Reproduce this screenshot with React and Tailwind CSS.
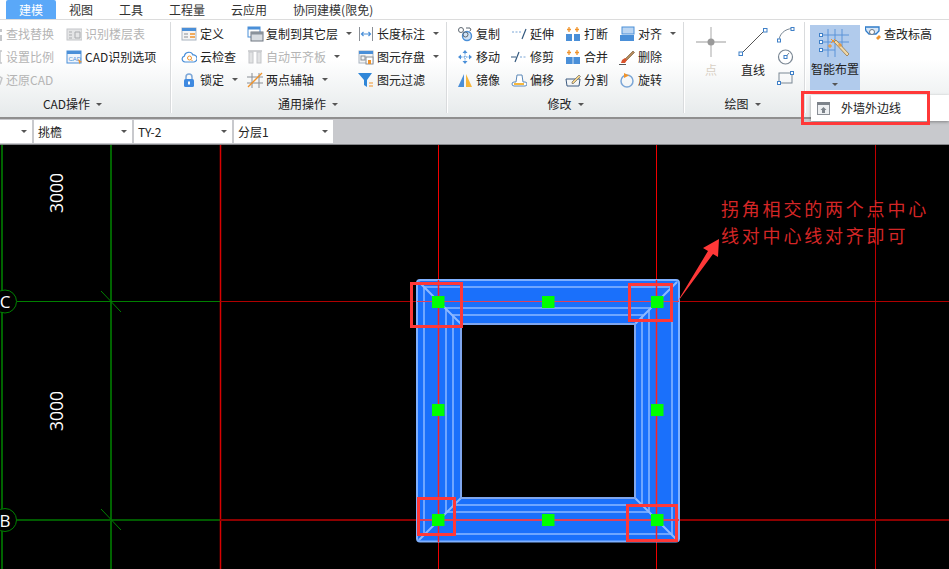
import React from 'react'

const BLUE = '#4a8fd8'
const ORANGE = '#f0932b'
const LIGHT = '#c4c6c9'

function Svg({ children, w = 16, h = 16 }) {
  return (
    <svg width={w} height={h} viewBox={`0 0 ${w} ${h}`} fill="none" className="shrink-0">
      {children}
    </svg>
  )
}

const icons = {
  find: (
    <Svg>
      <rect x="2" y="2" width="5" height="5" stroke={LIGHT} />
      <rect x="9" y="9" width="6" height="6" fill={LIGHT} />
      <rect x="11" y="3" width="4" height="3" fill={LIGHT} />
    </Svg>
  ),
  scale: (
    <Svg>
      <path d="M9 2h6M9 14h6M13 2v12" stroke={LIGHT} strokeWidth="1.5" />
    </Svg>
  ),
  restore: (
    <Svg>
      <path d="M10 3l5 3-2 6-4-1" stroke={LIGHT} strokeWidth="1.5" />
    </Svg>
  ),
  floorTable: (
    <Svg>
      <rect x="1" y="3" width="15" height="11" fill="#e4e5e6" stroke={LIGHT} />
      <path d="M3 6h3M3 9h3M3 12h3M9 6h5v6H9z" stroke="#a9abae" />
    </Svg>
  ),
  cadOpts: (
    <Svg>
      <rect x="1" y="2" width="14" height="12" fill="#eef4fb" stroke={BLUE} />
      <rect x="1" y="2" width="14" height="3" fill={BLUE} />
      <text x="2.5" y="12" fontSize="6" fill={BLUE} fontFamily="Liberation Sans">CAD</text>
      <path d="M12 10l4 3-2 .5-.5 2z" fill={ORANGE} />
    </Svg>
  ),
  define: (
    <Svg>
      <rect x="1" y="2" width="14" height="12" fill="#f4f4f4" stroke="#a9b4c0" />
      <rect x="1" y="2" width="14" height="3" fill={BLUE} />
      <path d="M3 8h4M3 11h4" stroke="#8a8f96" />
      <path d="M9 8h5M9 11h5" stroke={ORANGE} strokeWidth="1.5" />
    </Svg>
  ),
  cloud: (
    <Svg>
      <path d="M4 13a3 3 0 0 1-.6-5.9A4.5 4.5 0 0 1 12 6a3.5 3.5 0 0 1 1 7z" fill="#fff" stroke={BLUE} strokeWidth="1.2" />
      <circle cx="8.5" cy="9" r="2" stroke={ORANGE} />
      <path d="M10 10.5l1.5 1.5" stroke={ORANGE} />
    </Svg>
  ),
  lock: (
    <Svg>
      <path d="M5 7V5a3 3 0 0 1 6 0v2" stroke="#7da7d8" strokeWidth="1.5" />
      <rect x="3" y="7" width="10" height="8" rx="1.5" fill="#3f8ae0" />
      <rect x="7" y="9.5" width="2" height="3" fill="#fff" />
    </Svg>
  ),
  copyLayer: (
    <Svg w={17} h={16}>
      <rect x="1" y="1" width="12" height="10" fill="#fff" stroke={BLUE} />
      <rect x="1" y="1" width="12" height="2.5" fill={BLUE} />
      <rect x="4" y="6" width="12" height="9" fill="#d9dde2" stroke="#6e7781" />
      <rect x="4" y="6" width="12" height="2.5" fill="#8a929b" />
    </Svg>
  ),
  autoFlat: (
    <Svg>
      <path d="M1 2h14" stroke={LIGHT} strokeWidth="1.5" />
      <rect x="2" y="3" width="4" height="11" fill="#e2e3e4" stroke={LIGHT} />
      <rect x="10" y="3" width="4" height="11" fill="#e2e3e4" stroke={LIGHT} />
    </Svg>
  ),
  twoPoint: (
    <Svg>
      <path d="M5 1v15M12 1v15M0 5h16M0 11h16" stroke="#8a8f96" />
      <path d="M1 15L15 1" stroke={ORANGE} strokeWidth="1.3" />
    </Svg>
  ),
  dim: (
    <Svg>
      <path d="M1.5 1v14M14.5 1v14" stroke="#8a8f96" />
      <path d="M3.5 8h9M5.5 6L3.5 8l2 2M10.5 6l2 2-2 2" stroke={BLUE} strokeWidth="1.2" />
    </Svg>
  ),
  saveEl: (
    <Svg>
      <rect x="1" y="2" width="14" height="12" fill="#f4f4f4" stroke="#a9b4c0" />
      <rect x="1" y="2" width="14" height="3" fill={BLUE} />
      <rect x="3" y="7" width="4" height="4" stroke="#8a8f96" />
      <rect x="8" y="8" width="7" height="7" fill="#fff" stroke="#8a8f96" />
      <rect x="10" y="11" width="3" height="4" fill={ORANGE} />
    </Svg>
  ),
  filter: (
    <Svg>
      <path d="M0 1h14L9 8v7l-3-2V8z" fill="#2f86d8" />
      <path d="M11 11h4M11 14h4" stroke={ORANGE} strokeWidth="1.2" />
    </Svg>
  ),
  copy: (
    <Svg>
      <circle cx="4" cy="4" r="2.5" stroke="#5c6670" />
      <circle cx="10" cy="10" r="4.5" fill="#cfe2f6" stroke={BLUE} strokeWidth="1.4" />
      <circle cx="8.5" cy="8.5" r="2.5" stroke="#5c6670" />
      <path d="M9 2h4l1 2-1.5 1" stroke="#5c6670" />
    </Svg>
  ),
  extend: (
    <Svg>
      <path d="M1 6h9" stroke="#7ba6d6" strokeDasharray="2 1.5" />
      <path d="M11 13l4-10" stroke="#33587e" strokeWidth="1.2" />
    </Svg>
  ),
  breakEl: (
    <Svg>
      <rect x="1" y="8" width="6" height="7" fill={BLUE} />
      <rect x="9" y="8" width="6" height="7" fill={BLUE} />
      <path d="M4 1v5M2 3.5h4M12 1v5M10 3.5h4" stroke={ORANGE} strokeWidth="1.3" />
    </Svg>
  ),
  align: (
    <Svg>
      <rect x="3" y="1" width="12" height="7" fill="#bcd6f2" stroke={BLUE} />
      <rect x="1" y="9" width="14" height="6" fill={BLUE} />
    </Svg>
  ),
  move: (
    <Svg>
      <path d="M8 1l2.5 3h-5zM8 15l2.5-3h-5zM1 8l3-2.5v5zM15 8l-3-2.5v5z" fill={BLUE} />
      <path d="M8 4v8M4 8h8" stroke={BLUE} strokeDasharray="1.5 1" />
    </Svg>
  ),
  trim: (
    <Svg>
      <path d="M0 8h5" stroke="#33587e" />
      <path d="M9 8h7" stroke="#7ba6d6" strokeDasharray="2 1.5" />
      <path d="M4 13L8 3" stroke="#33587e" strokeWidth="1.2" />
    </Svg>
  ),
  merge: (
    <Svg>
      <rect x="1" y="8" width="14" height="7" fill={BLUE} />
      <path d="M8 8v7" stroke="#cfe2f6" />
      <path d="M4 1v5M2 3.5h4M12 1v5M10 3.5h4" stroke={ORANGE} strokeWidth="1.3" />
    </Svg>
  ),
  erase: (
    <Svg>
      <path d="M6 10l8-8 1.5 1.5-8 8z" fill="#b48a5a" stroke="#6e5230" strokeWidth=".6" />
      <path d="M3 11l3-2 2 2-2 3H2z" fill="#d9532c" />
      <path d="M0 15.5h7" stroke="#555" />
    </Svg>
  ),
  mirror: (
    <Svg>
      <path d="M7 2v13H1z" fill={BLUE} />
      <path d="M9 2v13h6z" fill="#f6b73c" />
    </Svg>
  ),
  offset: (
    <Svg>
      <path d="M1 12a2 2 0 0 1 2-2h2l1-7h5l1 7h2a2 2 0 0 1 0 4H3a2 2 0 0 1-2-2z" fill="#fff" stroke="#5c88b8" />
      <path d="M3 12h10" stroke="#f6b73c" strokeWidth="2" />
    </Svg>
  ),
  split: (
    <Svg>
      <path d="M1 7h14l-1 7H2z" stroke="#3d5b80" />
      <path d="M7 10l7-7 1.5 1.5-7 7H7z" fill="#f6d58a" stroke="#555" strokeWidth=".6" />
    </Svg>
  ),
  rotate: (
    <Svg>
      <circle cx="8" cy="9" r="6" stroke="#7ba6d6" strokeWidth="1.5" />
      <path d="M5 1l5 2.5L5 6z" fill={ORANGE} />
    </Svg>
  ),
  checkElev: (
    <Svg>
      <path d="M0 1h14v4l-3 3H4L1 5z" fill="#d5e6f8" stroke="#2f7cc9" strokeWidth="1.3" />
      <circle cx="7" cy="6" r="2.5" fill="#fff" stroke="#6e7781" />
      <path d="M11 12l3-3 2 2-3 3z" fill={ORANGE} />
    </Svg>
  ),
}

function Caret({ className = 'ml-[5px]' }) {
  return <span className={`inline-block w-0 h-0 border-x-[3px] border-x-transparent border-t-[3px] border-t-[#555] ${className}`} />
}

function Item({ icon, label, off, caret }) {
  return (
    <div className={`h-[23px] flex items-center gap-[3px] whitespace-nowrap ${off ? 'text-[#b4b4b4]' : 'text-[#222]'}`}>
      <span className="w-4 h-4 shrink-0">{icons[icon]}</span>
      <span>{label}</span>
      {caret && <Caret />}
    </div>
  )
}

function Column({ width, items }) {
  return (
    <div className={`flex flex-col shrink-0 ${width}`}>
      {items.map((it) => (
        <Item key={it.label} {...it} />
      ))}
    </div>
  )
}

function GroupLabel({ children, className = '' }) {
  return (
    <div className={`h-[18px] mb-[4px] flex items-center justify-center text-[#222] ${className}`}>
      {children}
      <Caret className="ml-[6px]" />
    </div>
  )
}

function Sep() {
  return <div className="w-[2px] h-[91px] mt-[2px] shrink-0 bg-[#d9dbdd] border-r border-white" />
}

function Ribbon() {
  return (
    <div className="h-[97px] flex bg-gradient-to-b from-white from-40% to-[#e6eaeb]">
      {/* CAD操作 */}
      <div className="w-[193px] -ml-[23px] shrink-0 flex flex-col justify-between pt-[2px]">
        <div className="flex pl-[10px]">
          <Column
            width="w-[79px]"
            items={[
              { icon: 'find', label: '查找替换', off: true },
              { icon: 'scale', label: '设置比例', off: true },
              { icon: 'restore', label: '还原CAD', off: true },
            ]}
          />
          <Column
            width="w-[100px]"
            items={[
              { icon: 'floorTable', label: '识别楼层表', off: true },
              { icon: 'cadOpts', label: 'CAD识别选项' },
            ]}
          />
        </div>
        <GroupLabel className="pr-[2px]">CAD操作</GroupLabel>
      </div>
      <Sep />

      {/* 通用操作 */}
      <div className="w-[274px] shrink-0 flex flex-col justify-between pt-[2px]">
        <div className="flex pl-[9px]">
          <Column
            width="w-[66px]"
            items={[
              { icon: 'define', label: '定义' },
              { icon: 'cloud', label: '云检查' },
              { icon: 'lock', label: '锁定', caret: true },
            ]}
          />
          <Column
            width="w-[111px]"
            items={[
              { icon: 'copyLayer', label: '复制到其它层', caret: true },
              { icon: 'autoFlat', label: '自动平齐板', caret: true, off: true },
              { icon: 'twoPoint', label: '两点辅轴', caret: true },
            ]}
          />
          <Column
            width="w-[85px]"
            items={[
              { icon: 'dim', label: '长度标注', caret: true },
              { icon: 'saveEl', label: '图元存盘', caret: true },
              { icon: 'filter', label: '图元过滤' },
            ]}
          />
        </div>
        <GroupLabel className="pr-[2px]">通用操作</GroupLabel>
      </div>
      <Sep />

      {/* 修改 */}
      <div className="w-[235px] shrink-0 flex flex-col justify-between pt-[2px]">
        <div className="flex pl-[9px]">
          <Column
            width="w-[54px]"
            items={[
              { icon: 'copy', label: '复制' },
              { icon: 'move', label: '移动' },
              { icon: 'mirror', label: '镜像' },
            ]}
          />
          <Column
            width="w-[54px]"
            items={[
              { icon: 'extend', label: '延伸' },
              { icon: 'trim', label: '修剪' },
              { icon: 'offset', label: '偏移' },
            ]}
          />
          <Column
            width="w-[54px]"
            items={[
              { icon: 'breakEl', label: '打断' },
              { icon: 'merge', label: '合并' },
              { icon: 'split', label: '分割' },
            ]}
          />
          <Column
            width="w-[60px]"
            items={[
              { icon: 'align', label: '对齐', caret: true },
              { icon: 'erase', label: '删除' },
              { icon: 'rotate', label: '旋转' },
            ]}
          />
        </div>
        <GroupLabel>修改</GroupLabel>
      </div>
      <Sep />

      {/* 绘图 */}
      <div className="w-[119px] shrink-0 flex flex-col justify-between pt-[7px]">
        <div className="flex pl-[8px]">
          <div className="w-[36px] flex flex-col items-center">
            <svg width="30" height="30" viewBox="0 0 30 30" fill="none">
              <path d="M15 0v30M0 15h30" stroke="#bdbdbd" strokeWidth="1.3" />
              <circle cx="15" cy="15" r="3.5" fill="#9a9a9a" />
            </svg>
            <span className="mt-[7px] text-[#d8cfc4]">点</span>
          </div>
          <div className="w-[38px] ml-[5px] flex flex-col items-center">
            <svg width="30" height="30" viewBox="0 0 30 30" fill="none">
              <path d="M3 27L27 3" stroke="#555" />
              <rect x="1" y="25" width="3.5" height="3.5" fill="#fff" stroke="#3f80c8" />
              <rect x="25.5" y="1.5" width="3.5" height="3.5" fill="#fff" stroke="#3f80c8" />
            </svg>
            <span className="mt-[7px] text-[#222]">直线</span>
          </div>
          <div className="ml-[5px] flex flex-col gap-[6px]">
            <svg width="18" height="16" viewBox="0 0 18 16" fill="none">
              <path d="M2 14C2 7 8 2 15 1.5" stroke="#7a8794" />
              <rect x="0.5" y="12" width="3" height="3" fill="#fff" stroke="#3f80c8" />
              <rect x="14" y="0.5" width="3" height="3" fill="#fff" stroke="#3f80c8" />
            </svg>
            <svg width="18" height="16" viewBox="0 0 18 16" fill="none">
              <circle cx="8.5" cy="8" r="7" stroke="#7a8794" strokeWidth="1.2" />
              <path d="M8.5 8L12 4" stroke="#7a8794" />
              <rect x="7" y="6.5" width="3" height="3" fill="#fff" stroke="#3f80c8" />
            </svg>
            <svg width="18" height="14" viewBox="0 0 18 14" fill="none">
              <rect x="2" y="2" width="13" height="10" stroke="#7a8794" />
              <rect x="0.5" y="10.5" width="3" height="3" fill="#fff" stroke="#3f80c8" />
              <rect x="13.5" y="0.5" width="3" height="3" fill="#fff" stroke="#3f80c8" />
            </svg>
          </div>
        </div>
        <GroupLabel className="pr-[4px]">绘图</GroupLabel>
      </div>
      <Sep />

      {/* 智能布置 */}
      <div className="flex-1 flex pl-[4px] pt-[5px] items-start">
        <div className="w-[50px] h-[65px] bg-[#b1cbec] flex flex-col items-center">
          <svg width="32" height="31" viewBox="0 0 32 31" fill="none" className="mt-[3px]">
            <path d="M9 1v28M16 1v28M23 1v18M2 7h28M2 14h28M2 22h14" stroke="#5b93d8" />
            <rect x="0.5" y="5.5" width="3" height="3" fill="#fff" stroke="#3f80c8" />
            <rect x="0.5" y="12.5" width="3" height="3" fill="#fff" stroke="#3f80c8" />
            <rect x="0.5" y="20.5" width="3" height="3" fill="#fff" stroke="#3f80c8" />
            <path d="M15 14l13 14 2-2L17 12z" fill="#f0d8a8" stroke="#8a6a3a" strokeWidth=".7" />
            <path d="M12 11l4 4M16 11l-4 4M9 18h4M11 16v4M19 17h4M21 15v4" stroke={ORANGE} />
          </svg>
          <span className="mt-[2px] leading-[16px] text-[#222] whitespace-nowrap">智能布置</span>
          <Caret className="mt-[6px]" />
        </div>
        <div className="ml-[5px] flex items-center gap-[3px] h-[18px] text-[#222] whitespace-nowrap">
          {icons.checkElev}
          <span>查改标高</span>
        </div>
      </div>
    </div>
  )
}

function Combo({ label, width }) {
  return (
    <div className={`h-[23px] bg-white flex items-center justify-between pl-[4px] pr-[5px] shrink-0 text-[#222] ${width}`}>
      <span>{label}</span>
      <Caret className="" />
    </div>
  )
}

const WALL_RINGS = [
  [424, 287, 672, 534],
  [446, 308, 649, 512],
  [453, 315, 642, 505],
]
const NODES = [
  [432, 296], [542, 296], [651, 296],
  [432, 404], [651, 404],
  [432, 514], [542, 514], [651, 514],
]
const MARKS = [
  [410, 282, 53, 46],
  [628, 283, 45, 39],
  [417, 497, 39, 39],
  [626, 504, 52, 38],
]

function Canvas() {
  return (
    <svg width="949" height="424" viewBox="0 145 949 424" className="block bg-black">
      {/* axis grid */}
      <path d="M2 145v424M111 145v424" stroke="#006400" strokeWidth="2" />
      <path d="M17 301.5h203" stroke="#008000" />
      <path d="M17 520h203" stroke="#005a00" strokeWidth="2" />
      <path d="M101 291l20 21M101 509l20 21" stroke="#008000" />
      <circle cx="5" cy="301.5" r="11.5" stroke="#008000" />
      <circle cx="5" cy="520" r="11.5" stroke="#008000" />
      <text x="5" y="308" fill="#fff" fontSize="17" textAnchor="middle" fontFamily="Open Sans, sans-serif">C</text>
      <text x="5" y="527" fill="#fff" fontSize="17" textAnchor="middle" fontFamily="Open Sans, sans-serif">B</text>
      <text transform="translate(63 213) rotate(-90)" fill="#fff" fontSize="17.5" fontFamily="Open Sans, sans-serif">3000</text>
      <text transform="translate(63 431) rotate(-90)" fill="#fff" fontSize="17.5" fontFamily="Open Sans, sans-serif">3000</text>
      <path d="M220.5 145v424" stroke="#d80000" strokeWidth="1.5" />
      <path d="M875.5 145v424" stroke="#c00000" />
      <path d="M220 301.5h729" stroke="#b00000" />
      <path d="M220 520h729" stroke="#8c0000" strokeWidth="2" />
      <path d="M438.5 145v424M656.5 145v424" stroke="#f00000" />

      {/* wall */}
      <rect x="417" y="280" width="262" height="261.5" rx="3" fill="#1a70fb" stroke="#7fb0ff" strokeWidth="2" />
      {WALL_RINGS.map(([x1, y1, x2, y2]) => (
        <rect key={x1} x={x1} y={y1} width={x2 - x1} height={y2 - y1} stroke="#6fa6ff" strokeWidth="2" fill="none" />
      ))}
      <path d="M419 282l42 42M677 282l-42 42M419 540l42-42M677 540l-42-42" stroke="#8db8ff" strokeWidth="2" />
      <rect x="461" y="324" width="174" height="174" fill="#000" stroke="#7fa6ee" strokeWidth="2" />
      <path d="M417 301.5h262" stroke="#e0405a" />
      <path d="M417 520h262" stroke="#e0405a" strokeWidth="2" />
      <path d="M438.5 280v262M656.5 280v262" stroke="#ff2020" strokeWidth="1.5" />
      {NODES.map(([x, y]) => (
        <rect key={`${x}-${y}`} x={x} y={y} width="12.5" height="12" fill="#00ff00" />
      ))}

      {/* marks */}
      {MARKS.map(([x, y, w, h]) => (
        <rect key={x} x={x + 1.5} y={y + 1.5} width={w - 3} height={h - 3} stroke="#ff3838" strokeWidth="3" fill="none" />
      ))}
      <path d="M676 304L708 251L703 248L719 239L718 257L713 254z" fill="#ff3838" />
    </svg>
  )
}

export default function App() {
  return (
    <div className="relative w-[949px] h-[569px] overflow-hidden bg-[#c8c9cd] text-[12px] leading-none font-['Noto_Sans_CJK_SC','Liberation_Sans',sans-serif]">
      {/* Tabs */}
      <div className="h-[20px] flex items-end pl-[6px] bg-white border-b border-[#dcdcdc]">
        {['建模', '视图', '工具', '工程量', '云应用', '协同建模(限免)'].map((t, i) => (
          <div
            key={t}
            className={`h-[19px] px-[13px] flex items-center rounded-t-[2px] ${i === 0 ? 'bg-[#5aa8f8] text-white' : 'text-[#333]'}`}
          >
            {t}
          </div>
        ))}
      </div>

      <Ribbon />

      {/* property bar */}
      <div className="h-[28px] border-t-2 border-[#8f8f8f] border-b border-b-[#85868a] pt-[1px] flex gap-[2px] bg-[#c8c9cd]">
        <Combo label="" width="w-[99px] -ml-[67px]" />
        <Combo label="挑檐" width="w-[98px]" />
        <Combo label="TY-2" width="w-[98px]" />
        <Combo label="分层1" width="w-[99px]" />
      </div>

      <Canvas />

      {/* note written over the drawing */}
      <div className="absolute left-[721px] top-[195px] text-[18px] leading-[27px] tracking-[2.8px] text-[#d42626] whitespace-nowrap">
        <div>拐角相交的两个点中心</div>
        <div>线对中心线对齐即可</div>
      </div>

      {/* dropdown menu */}
      <div className="absolute left-[811px] top-[95px] w-[138px] h-[26px] bg-white shadow-[0_1px_3px_rgba(0,0,0,0.35)] flex items-center pl-[6px] gap-[11px] text-[#222]">
        <svg width="13" height="13" viewBox="0 0 13 13" fill="none">
          <rect x=".5" y=".5" width="12" height="12" fill="#eef0f2" stroke="#8a8f96" />
          <rect x="0" y="0" width="13" height="3" fill="#7d838a" />
          <path d="M6.5 5l3 3H8v3H5V8H3.5z" fill="#7d838a" />
        </svg>
        <span>外墙外边线</span>
      </div>
      <div className="absolute left-[801px] top-[91px] w-[129px] h-[34px] border-[3px] border-[#ff3838]" />
    </div>
  )
}
